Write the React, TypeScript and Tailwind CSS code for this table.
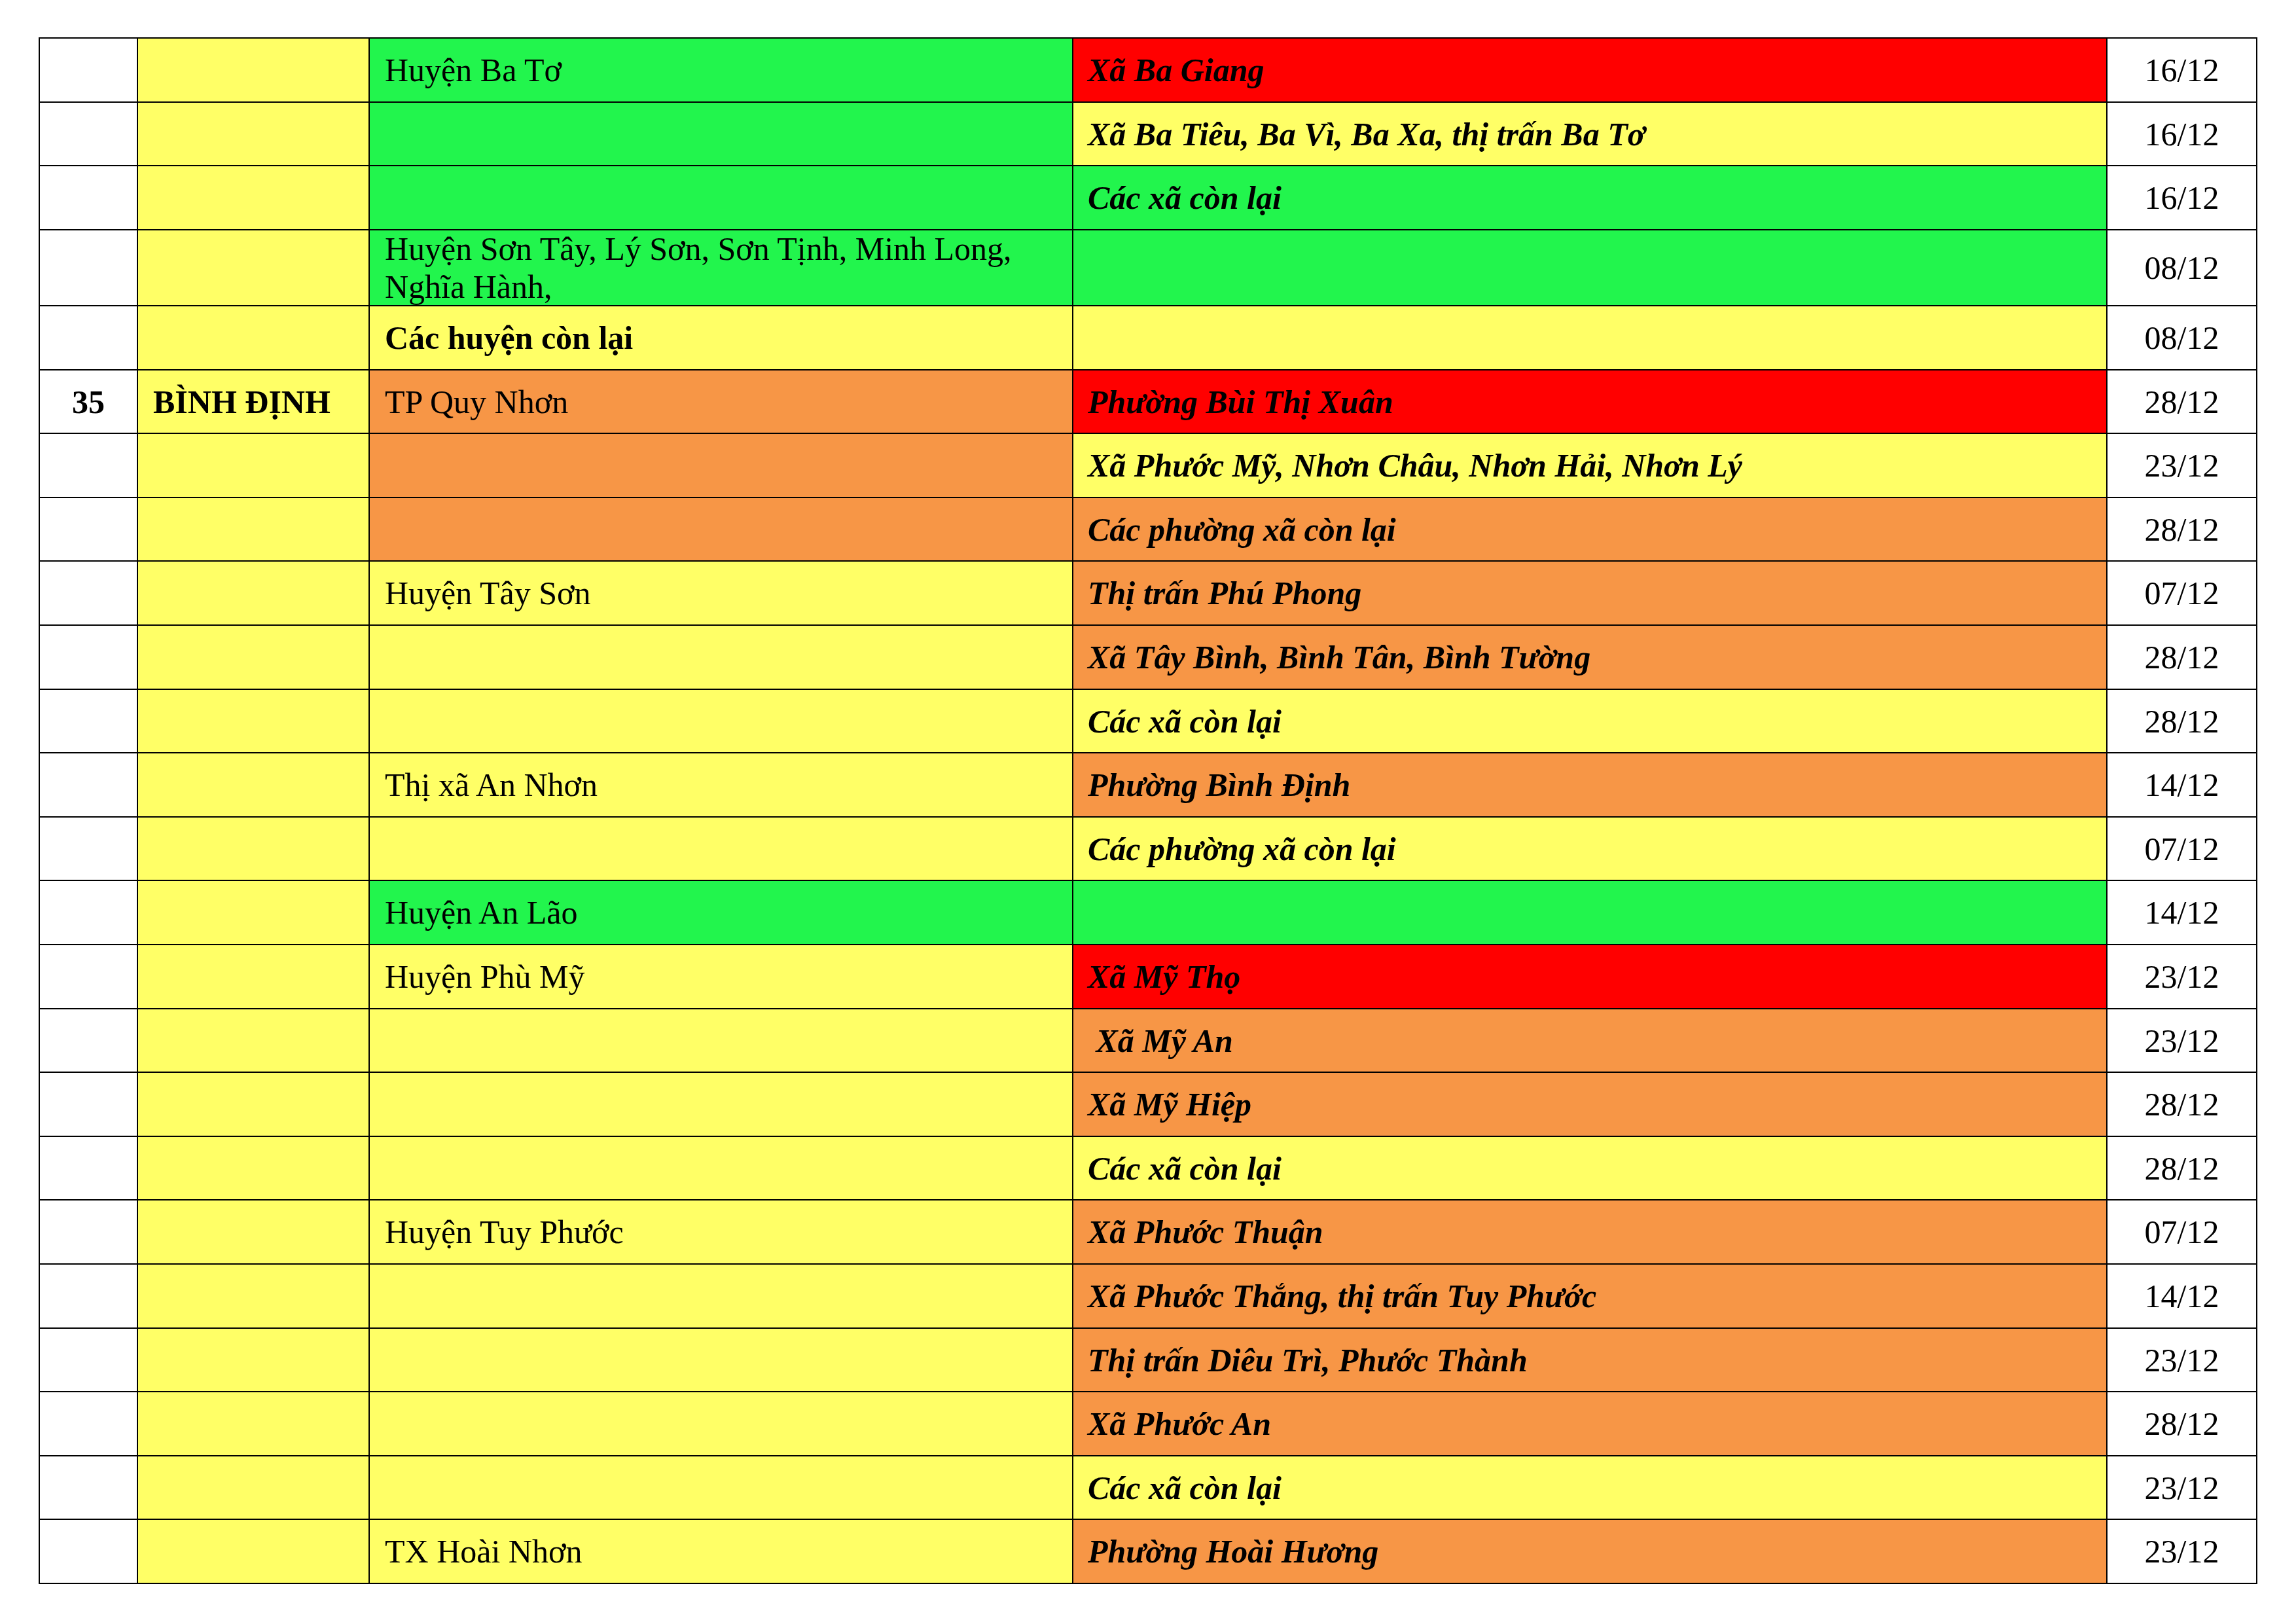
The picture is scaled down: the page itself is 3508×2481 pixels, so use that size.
import React from "react";

type Color = "g" | "y" | "o" | "r" | "w";

type Row = {
  no?: string;
  prov?: string;
  dist: string;
  distBold?: boolean;
  distColor: Color;
  ward: string;
  wardColor: Color;
  date: string;
  tall?: boolean;
};

const bg: Record<Color, string> = {
  g: "bg-[#22f54d]",
  y: "bg-[#ffff66]",
  o: "bg-[#f79646]",
  r: "bg-[#ff0000]",
  w: "bg-white",
};

const rows: Row[] = [
  { dist: "Huyện Ba Tơ", distColor: "g", ward: "Xã Ba Giang", wardColor: "r", date: "16/12" },
  { dist: "", distColor: "g", ward: "Xã Ba Tiêu, Ba Vì, Ba Xa, thị trấn Ba Tơ", wardColor: "y", date: "16/12" },
  { dist: "", distColor: "g", ward: "Các xã còn lại", wardColor: "g", date: "16/12" },
  { dist: "Huyện Sơn Tây, Lý Sơn, Sơn Tịnh, Minh Long,\nNghĩa Hành,", distColor: "g", ward: "", wardColor: "g", date: "08/12", tall: true },
  { dist: "Các huyện còn lại", distBold: true, distColor: "y", ward: "", wardColor: "y", date: "08/12" },
  { no: "35", prov: "BÌNH ĐỊNH", dist: "TP Quy Nhơn", distColor: "o", ward: "Phường Bùi Thị Xuân", wardColor: "r", date: "28/12" },
  { dist: "", distColor: "o", ward: "Xã Phước Mỹ, Nhơn Châu, Nhơn Hải, Nhơn Lý", wardColor: "y", date: "23/12" },
  { dist: "", distColor: "o", ward: "Các phường xã còn lại", wardColor: "o", date: "28/12" },
  { dist: "Huyện Tây Sơn", distColor: "y", ward: "Thị trấn Phú Phong", wardColor: "o", date: "07/12" },
  { dist: "", distColor: "y", ward: "Xã Tây Bình, Bình Tân, Bình Tường", wardColor: "o", date: "28/12" },
  { dist: "", distColor: "y", ward: "Các xã còn lại", wardColor: "y", date: "28/12" },
  { dist: "Thị xã An Nhơn", distColor: "y", ward: "Phường Bình Định", wardColor: "o", date: "14/12" },
  { dist: "", distColor: "y", ward: "Các phường xã còn lại", wardColor: "y", date: "07/12" },
  { dist: "Huyện An Lão", distColor: "g", ward: "", wardColor: "g", date: "14/12" },
  { dist: "Huyện Phù Mỹ", distColor: "y", ward: "Xã Mỹ Thọ", wardColor: "r", date: "23/12" },
  { dist: "", distColor: "y", ward: " Xã Mỹ An", wardColor: "o", date: "23/12" },
  { dist: "", distColor: "y", ward: "Xã Mỹ Hiệp", wardColor: "o", date: "28/12" },
  { dist: "", distColor: "y", ward: "Các xã còn lại", wardColor: "y", date: "28/12" },
  { dist: "Huyện Tuy Phước", distColor: "y", ward: "Xã Phước Thuận", wardColor: "o", date: "07/12" },
  { dist: "", distColor: "y", ward: "Xã Phước Thắng, thị trấn Tuy Phước", wardColor: "o", date: "14/12" },
  { dist: "", distColor: "y", ward: "Thị trấn Diêu Trì, Phước Thành", wardColor: "o", date: "23/12" },
  { dist: "", distColor: "y", ward: "Xã Phước An", wardColor: "o", date: "28/12" },
  { dist: "", distColor: "y", ward: "Các xã còn lại", wardColor: "y", date: "23/12" },
  { dist: "TX Hoài Nhơn", distColor: "y", ward: "Phường Hoài Hương", wardColor: "o", date: "23/12" },
];

// row bottom-edge positions (exclusive), measured from the reference
function rowHeights(): number[] {
  const ends = [59, 157, 254, 352, 468];
  for (let k = 5; k <= 24; k++) ends.push(Math.round(468 + 97.6 * (k - 4)));
  const h: number[] = [];
  for (let i = 1; i < ends.length; i++) h.push(ends[i] - ends[i - 1]);
  return h;
}

export default function App() {
  const heights = rowHeights();
  return (
    <div className="min-h-screen w-[3508px] bg-white pl-[59px] pt-[57px] font-['Liberation_Serif','Times_New_Roman',serif] text-[50px] leading-[58px] text-black">
      <div className="w-[3390px] border-l-2 border-t-2 border-black">
        {rows.map((r, i) => {
          const hc = r.tall ? "h-[116px]" : heights[i] === 98 ? "h-[98px]" : "h-[97px]";
          return (
            <div
              key={i}
              className={`grid grid-cols-[150px_354px_1075px_1580px_229px] grid-rows-[minmax(0,1fr)] ${hc}`}
            >
              <div className="flex min-h-0 items-center justify-center border-b-2 border-r-2 border-black bg-white font-bold">
                {r.no ?? ""}
              </div>
              <div className="flex min-h-0 items-center border-b-2 border-r-2 border-black bg-[#ffff66] pl-[23px] font-bold whitespace-nowrap">
                {r.prov ?? ""}
              </div>
              <div
                className={`flex min-h-0 items-center border-b-2 border-r-2 border-black pl-[23px] pr-[20px] whitespace-pre-line ${bg[r.distColor]} ${r.distBold ? "font-bold" : "font-normal"}`}
              >
                <span>{r.dist}</span>
              </div>
              <div
                className={`flex min-h-0 items-center border-b-2 border-r-2 border-black pl-[22px] font-bold italic whitespace-pre ${bg[r.wardColor]}`}
              >
                {r.ward}
              </div>
              <div className="flex min-h-0 items-center justify-center border-b-2 border-r-2 border-black bg-white">
                {r.date}
              </div>
            </div>
          );
        })}
      </div>
    </div>
  );
}
